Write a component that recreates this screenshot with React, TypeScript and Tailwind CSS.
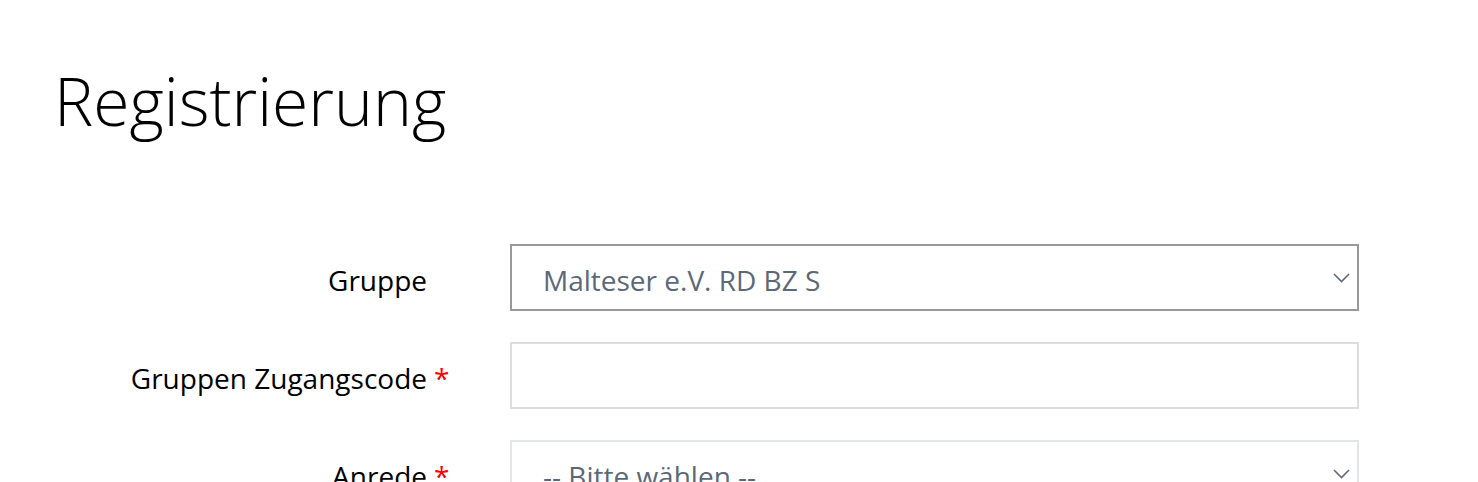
import React from 'react';

function Chevron() {
  return (
    <svg
      className="pointer-events-none absolute right-[9px] top-1/2 -translate-y-1/2"
      width="17"
      height="10"
      viewBox="0 0 17 10"
      fill="none"
    >
      <path d="M1 1l7.5 7.5L16 1" stroke="#5f6b7a" strokeWidth="1.6" />
    </svg>
  );
}

function Label({ text, required }: { text: string; required?: boolean }) {
  return (
    <div className="flex items-center justify-end pt-[5px] text-[28px] text-black">
      <span className="relative">
        {text}
        {required && <span className="absolute left-full ml-[7px] text-[#ff0000]">*</span>}
      </span>
    </div>
  );
}

function SelectBox({ value, border }: { value: string; border: string }) {
  return (
    <div className="relative">
      <select
        className={`h-[67px] w-full appearance-none border-2 ${border} bg-white pl-[31px] pr-10 pt-[5px] text-[28px] text-[#5b6877] outline-none`}
        defaultValue={value}
      >
        <option>{value}</option>
      </select>
      <Chevron />
    </div>
  );
}

export default function App() {
  return (
    <div className="min-h-screen bg-white pl-[50px] pt-[67px]" style={{ fontFamily: '"Open Sans", sans-serif' }}>
      <h1 className="ml-[4px] text-[66px] font-light leading-none text-black">Registrierung</h1>

      <div className="mt-[111px] grid grid-cols-[377px_849px] gap-x-[83px] gap-y-[31px]">
        <Label text="Gruppe" />
        <SelectBox value="Malteser e.V. RD BZ S" border="border-[#999999]" />

        <Label text="Gruppen Zugangscode" required />
        <input className="h-[67px] w-full border-2 border-[#dddddd] bg-white px-[31px] text-[28px] outline-none" />

        <Label text="Anrede" required />
        <SelectBox value="-- Bitte wählen --" border="border-[#e3e6e9]" />
      </div>
    </div>
  );
}
